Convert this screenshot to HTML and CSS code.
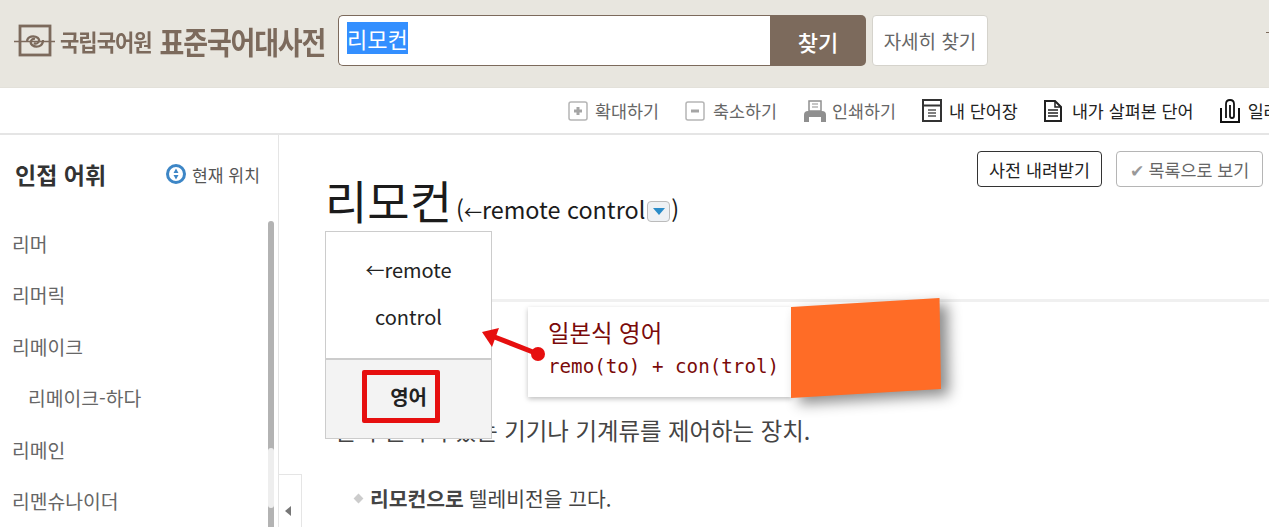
FILE: index.html
```html
<!DOCTYPE html>
<html lang="ko">
<head>
  <meta charset="UTF-8" />
  <meta name="viewport" content="width=device-width, initial-scale=1.0" />
  <title>표준국어대사전</title>
  <link rel="stylesheet" href="styles.css">
</head>
<body>
  <!-- Header -->
  <header class="header">
    <div class="logo">
      <svg class="logo-mark" width="42" height="34" viewBox="0 0 42 34">
        <rect x="6" y="2" width="30" height="29" fill="none" stroke="#7c6a5c" stroke-width="2.8"/>
        <path d="M0 17.5 H41" stroke="#7c6a5c" stroke-width="1.4"/>
        <path d="M13 18 C13 12 20 11 24 14 C27 17 23 21 20 19 M29 16 C29 23 22 24 18 21 C15 18 18 14 21 15" fill="none" stroke="#7c6a5c" stroke-width="2.2"/>
      </svg>
      <span class="logo-small">국립국어원</span>
      <span class="logo-big">표준국어대사전</span>
    </div>
    <form class="search">
      <div class="search-input"><span class="selected">리모컨</span></div>
      <button type="button" class="search-btn">찾기</button>
    </form>
    <button type="button" class="detail-btn">자세히 찾기</button>
    <span class="edge-mark"></span>
  </header>

  <!-- Toolbar -->
  <nav class="toolbar">
    <a class="tool muted">
      <svg width="20" height="20" viewBox="0 0 20 20"><rect x="1" y="1" width="18" height="18" rx="2" fill="#fff" stroke="#b5b5b5" stroke-width="1.5"/><path d="M6 10H14M10 6V14" stroke="#a5a5a5" stroke-width="3"/></svg>
      확대하기
    </a>
    <a class="tool muted">
      <svg width="20" height="20" viewBox="0 0 20 20"><rect x="1" y="1" width="18" height="18" rx="2" fill="#fff" stroke="#b5b5b5" stroke-width="1.5"/><path d="M6 10H14" stroke="#a5a5a5" stroke-width="3"/></svg>
      축소하기
    </a>
    <a class="tool muted">
      <svg width="24" height="22" viewBox="0 0 24 22"><rect x="6" y="1" width="12" height="10" fill="#fff" stroke="#8f8f8f" stroke-width="1.5"/><path d="M9 4H15M9 7H15" stroke="#8f8f8f"/><path d="M1 15 Q1 11 5 11 H19 Q23 11 23 15 V22 H1Z" fill="#8f8f8f"/><rect x="6" y="17" width="12" height="5" fill="#fff"/></svg>
      인쇄하기
    </a>
    <a class="tool">
      <svg width="20" height="23" viewBox="0 0 20 23"><rect x="1" y="1" width="18" height="21" fill="#fff" stroke="#333" stroke-width="2"/><path d="M1 6.5H19" stroke="#333" stroke-width="2"/><path d="M6 11H14M6 14H14M6 17H14" stroke="#555" stroke-width="1.3"/></svg>
      내 단어장
    </a>
    <a class="tool">
      <svg width="18" height="22" viewBox="0 0 18 22"><path d="M1 1H11L17 7V21H1Z" fill="#fff" stroke="#222" stroke-width="2"/><path d="M11 1V7H17" fill="none" stroke="#222" stroke-width="1.5"/><path d="M4 10H14M4 13H14M4 16H14" stroke="#222" stroke-width="1.3"/></svg>
      내가 살펴본 단어
    </a>
    <a class="tool">
      <svg width="20" height="24" viewBox="0 0 20 24"><path d="M1 9V23H19V9" fill="#fff" stroke="#111" stroke-width="2"/><path d="M6 19V5Q6 1 10 1Q14 1 14 5V17Q14 19 12 19Q10 19 10 17V6" fill="none" stroke="#111" stroke-width="1.8"/></svg>
      일러두기
    </a>
  </nav>

  <div class="page">
    <!-- Sidebar -->
    <aside class="sidebar">
      <div class="side-head">
        <h3>인접 어휘</h3>
        <span class="here">
          <svg width="22" height="22" viewBox="0 0 22 22"><circle cx="11" cy="11" r="8.5" fill="#fff" stroke="#3d86c6" stroke-width="3"/><path d="M11 5.5L13.5 10H8.5ZM11 16.5L8.5 12H13.5Z" fill="#3d86c6"/></svg>
          현재 위치
        </span>
      </div>
      <ul class="word-list">
        <li>리머</li>
        <li>리머릭</li>
        <li>리메이크</li>
        <li class="sub">리메이크-하다</li>
        <li>리메인</li>
        <li>리멘슈나이더</li>
      </ul>
      <div class="scrollbar"><div class="scroll-light"></div></div>
    </aside>
    <div class="collapse"><span class="tri"></span></div>

    <!-- Content -->
    <main class="content">
      <div class="actions">
        <button type="button" class="act dark">사전 내려받기</button>
        <button type="button" class="act gray"><span class="check">✔</span> 목록으로 보기</button>
      </div>
      <h1 class="word">리모컨<span class="origin">(<span class="arrow">←</span>remote control<span class="drop"><span class="drop-tri"></span></span>)</span></h1>
      <div class="rule"></div>
      <p class="def">멀리 떨어져 있는 기기나 기계류를 제어하는 장치.</p>
      <p class="example"><span class="dot"></span><b>리모컨으로</b> 텔레비전을 끄다.</p>

      <div class="popup">
        <div class="popup-top">
          <div><span class="arrow">←</span>remote</div>
          <div>control</div>
        </div>
        <div class="popup-bottom"><span class="mark">영어</span></div>
      </div>
    </main>
  </div>

  <!-- Annotation over the screenshot -->
  <div class="note">
    <div class="note-text"><span class="note-ko">일본식 영어</span><br>remo(to) + con(trol)</div>
    <div class="note-shadow"><div class="note-patch"></div></div>
  </div>
  <svg class="note-arrow" width="70" height="40" viewBox="0 0 70 40">
    <path d="M58 27 L12 9" stroke="#e60f0f" stroke-width="5"/>
    <path d="M2 5 L19 1 L12 20Z" fill="#e60f0f"/>
    <circle cx="58" cy="27" r="7" fill="#e60f0f"/>
  </svg>
</body>
</html>
```

FILE: styles.css
```css
* {
  box-sizing: border-box;
  font-family: "Noto Sans CJK KR", "Noto Sans", sans-serif;
}

html, body {
  margin: 0;
  padding: 0;
  height: 527px;
  overflow: hidden;
  background: #fff;
}

button {
  cursor: pointer;
  font-size: 17px;
}

/* header */
.header {
  height: 88px;
  background: #e8e6df;
  display: flex;
  align-items: center;
  padding: 0 0 6px 14px;
  border-bottom: 1px solid #e3e1da;
  position: relative;
}

.logo {
  width: 324px;
  display: flex;
  align-items: center;
  color: #7c6a5c;
  white-space: nowrap;
}

.logo-mark {
  margin-right: 4px;
}

.logo-small {
  font-size: 21px;
  font-weight: 700;
  letter-spacing: -1px;
  margin-right: 8px;
  display: inline-block;
  transform: scaleY(1.1);
}

.logo-big {
  font-size: 27px;
  font-weight: 700;
  letter-spacing: -1.2px;
  display: inline-block;
  transform: scaleY(1.15);
}

.edge-mark {
  position: absolute;
  right: 0;
  top: 32px;
  width: 3px;
  height: 1px;
  background: #7c6a5c;
}

.search {
  display: flex;
  width: 528px;
  height: 51px;
  margin: 0;
}

.search-input {
  flex: 1;
  background: #fff;
  border: 1px solid #7c6a5c;
  border-right: none;
  border-radius: 5px 0 0 5px;
  padding-left: 8px;
  font-size: 22px;
  line-height: 45px;
  color: #fff;
}

.selected {
  background: #338fff;
}

.search-btn {
  width: 96px;
  border: none;
  background: #7c6a5c;
  color: #fff;
  font-size: 22px;
  font-weight: 500;
  border-radius: 0 5px 5px 0;
}

.detail-btn {
  width: 116px;
  height: 51px;
  margin-left: 6px;
  background: #fff;
  border: 1px solid #d5d3cc;
  border-radius: 4px;
  color: #666;
  font-size: 19px;
  padding: 0;
}

/* toolbar */
.toolbar {
  height: 47px;
  padding-left: 568px;
  display: flex;
  align-items: center;
  gap: 26px;
  border-bottom: 2px solid #e5e5e5;
  white-space: nowrap;
  overflow: hidden;
}

.tool {
  display: flex;
  align-items: center;
  gap: 8px;
  font-size: 17.4px;
  color: #222;
  flex-shrink: 0;
}

.tool.muted {
  color: #666;
  gap: 7px;
}

.tool.muted:nth-child(2) {
  gap: 8px;
}

.tool.muted:nth-child(3) {
  gap: 5px;
}

.tool:nth-child(4) {
  gap: 7px;
}

.tool:nth-child(5) {
  gap: 10px;
}

/* page */
.page {
  display: flex;
  height: 393px;
  position: relative;
}

.sidebar {
  width: 279px;
  border-right: 1px solid #e5e5e5;
  padding: 20px 0 0 0;
  position: relative;
  overflow: hidden;
}

.side-head {
  display: flex;
  justify-content: space-between;
  align-items: center;
  padding: 0 18px 0 15px;
  height: 38px;
}

.side-head h3 {
  margin: 0;
  font-size: 23px;
  font-weight: 700;
  color: #333;
}

.here {
  display: flex;
  align-items: center;
  gap: 5px;
  font-size: 17.2px;
  color: #555;
}

.word-list {
  list-style: none;
  margin: 0;
  padding: 26px 0 0 12px;
}

.word-list li {
  height: 51.4px;
  line-height: 51.4px;
  font-size: 19.3px;
  color: #666;
}

.word-list .sub {
  padding-left: 16px;
}

.scrollbar {
  position: absolute;
  right: 4px;
  top: 86px;
  bottom: 0;
  width: 6px;
  background: #b3b3b3;
  border-radius: 3px 3px 0 0;
}

.scroll-light {
  margin-top: 227px;
  height: 60px;
  background: #eee;
  border-radius: 3px;
}

.collapse {
  position: absolute;
  left: 278px;
  top: 339px;
  width: 24px;
  height: 60px;
  background: #fff;
  border: 1px solid #e5e5e5;
  display: flex;
  align-items: center;
  justify-content: center;
}

.tri {
  width: 0;
  height: 0;
  border: 5px solid transparent;
  border-left: none;
  border-right: 6px solid #777;
  margin-top: 14px;
  margin-right: 5px;
}

/* content */
.content {
  flex: 1;
  position: relative;
  padding-left: 46px;
}

.actions {
  position: absolute;
  top: 16px;
  right: 6px;
  display: flex;
  gap: 14px;
}

.act {
  height: 36px;
  background: #fff;
  border-radius: 4px;
  font-size: 17.4px;
  padding: 0;
}

.act.dark {
  width: 125px;
  border: 1px solid #333;
  color: #222;
}

.act.gray {
  width: 147px;
  border: 1px solid #b5b5b5;
  color: #666;
}

.check {
  color: #999;
}

.word {
  margin: 29px 0 0 0;
  height: 70px;
  font-size: 46px;
  font-weight: 400;
  color: #1b1b1b;
  line-height: 70px;
  white-space: nowrap;
}

.origin {
  font-size: 23.4px;
  margin-left: 4px;
}

.arrow {
  font-size: 18px;
}

.drop {
  display: inline-block;
  width: 23px;
  height: 21px;
  margin: 0 1px 0 2px;
  vertical-align: -3px;
  border: 1px solid #bbb;
  border-radius: 4px;
  background: #eef1f4;
  position: relative;
}

.drop-tri {
  position: absolute;
  left: 5px;
  top: 6px;
  width: 0;
  height: 0;
  border: 6px solid transparent;
  border-top: 7px solid #2a8cc8;
  border-bottom: none;
}

.rule {
  height: 3px;
  background: #f0f0f0;
  margin-top: 65px;
}

.def {
  margin: 111px 0 0 9px;
  font-size: 23.4px;
  line-height: 34px;
  color: #444;
  white-space: nowrap;
}

.example {
  margin: 36px 0 0 30px;
  font-size: 20.4px;
  line-height: 30px;
  color: #444;
  white-space: nowrap;
  display: flex;
  align-items: center;
  gap: 5px;
}

.dot {
  width: 7px;
  height: 7px;
  background: #ccc;
  transform: rotate(45deg);
  margin-right: 3px;
}

.popup {
  position: absolute;
  left: 46px;
  top: 96px;
  width: 167px;
  height: 208px;
  background: #fff;
  border: 1px solid #ccc;
  display: flex;
  flex-direction: column;
}

.popup-top {
  height: 126px;
  padding-top: 14px;
  text-align: center;
  font-size: 20px;
  line-height: 47px;
  color: #222;
}

.popup-top .arrow {
  font-size: 19px;
}

.popup-bottom {
  flex: 1;
  background: #f3f3f3;
  border-top: 2px solid #ccc;
  padding: 10px 0 0 36px;
}

.mark {
  display: flex;
  width: 78px;
  height: 53px;
  border: 5px solid #e60f0f;
  border-radius: 2px;
  align-items: center;
  justify-content: flex-end;
  padding-right: 8px;
  font-size: 20px;
  font-weight: 700;
  color: #222;
}

/* annotation */
.note {
  position: absolute;
  left: 528px;
  top: 307px;
  width: 412px;
  height: 90px;
}

.note-text {
  width: 264px;
  height: 90px;
  background: #fff;
  box-shadow: 0 2px 5px rgba(0, 0, 0, 0.25);
  padding: 10px 0 0 20px;
  font-family: "DejaVu Sans Mono", "Noto Sans CJK KR", monospace;
  font-size: 19.2px;
  line-height: 31px;
  color: #7a0a0a;
  white-space: nowrap;
}

.note-ko {
  font-size: 23.4px;
  font-family: "Noto Sans CJK KR", sans-serif;
}

.note-shadow {
  position: absolute;
  left: 263px;
  top: -9px;
  filter: drop-shadow(8px 6px 7px rgba(0, 0, 0, 0.45));
}

.note-patch {
  width: 150px;
  height: 100px;
  background: #ff6c26;
  clip-path: polygon(0 9%, 99% 0, 100% 91%, 0 100%);
}

.note-arrow {
  position: absolute;
  left: 480px;
  top: 327px;
}
```
